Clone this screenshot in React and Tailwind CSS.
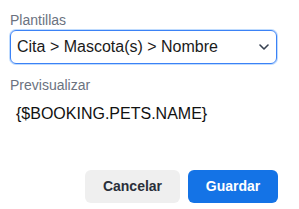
export default function App() {
  return (
    <div className="w-[299px] h-[209px] bg-white pl-[10px] pt-[10px]" style={{ fontFamily: '"Liberation Sans", Arial, sans-serif' }}>
      <div className="w-[267px] flex flex-col">
        <div className="text-[14px] leading-[20px] text-[#6b7280]">Plantillas</div>
        <div className="h-[34px] w-[267px] rounded-[6px] border border-[#3b82f6] ring-1 ring-[#bfdbfe] flex items-center justify-between pl-[6px] pr-[7px]">
          <span className="text-[16px] leading-[20px] text-[#1a1a1a]">Cita &gt; Mascota(s) &gt; Nombre</span>
          <svg width="10" height="6" viewBox="0 0 10 6" fill="none">
            <path d="M1 1L5 5L9 1" stroke="#374151" strokeWidth="1.6" strokeLinecap="round" strokeLinejoin="round" />
          </svg>
        </div>
        <div className="mt-[11px] text-[14px] leading-[20px] text-[#6b7280]">Previsualizar</div>
        <div className="mt-[7px] pl-[6px] text-[16px] leading-[24px] text-[#111]">{'{$BOOKING.PETS.NAME}'}</div>
        <div className="mt-[44px] flex justify-end gap-[8px] mr-[-1px]">
          <button className="w-[95px] h-[33px] rounded-[6px] bg-[#efefef] text-[14px] font-bold text-[#2a2f3a]">Cancelar</button>
          <button className="w-[90px] h-[33px] rounded-[6px] bg-[#1473e6] text-[14px] font-bold text-white">Guardar</button>
        </div>
      </div>
    </div>
  );
}
